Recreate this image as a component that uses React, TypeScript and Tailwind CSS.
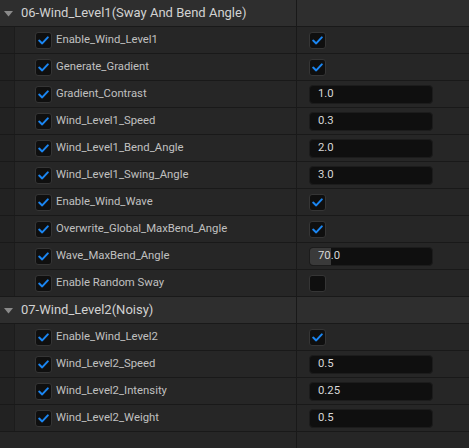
type Row = {
  label: string;
  kind: "check" | "input" | "slider" | "empty";
  value?: string;
};

const level1: Row[] = [
  { label: "Enable_Wind_Level1", kind: "check" },
  { label: "Generate_Gradient", kind: "check" },
  { label: "Gradient_Contrast", kind: "input", value: "1.0" },
  { label: "Wind_Level1_Speed", kind: "input", value: "0.3" },
  { label: "Wind_Level1_Bend_Angle", kind: "input", value: "2.0" },
  { label: "Wind_Level1_Swing_Angle", kind: "input", value: "3.0" },
  { label: "Enable_Wind_Wave", kind: "check" },
  { label: "Overwrite_Global_MaxBend_Angle", kind: "check" },
  { label: "Wave_MaxBend_Angle", kind: "slider", value: "70.0" },
  { label: "Enable Random Sway", kind: "empty" },
];

const level2: Row[] = [
  { label: "Enable_Wind_Level2", kind: "check" },
  { label: "Wind_Level2_Speed", kind: "input", value: "0.5" },
  { label: "Wind_Level2_Intensity", kind: "input", value: "0.25" },
  { label: "Wind_Level2_Weight", kind: "input", value: "0.5" },
];

const CheckBox = ({ checked }: { checked: boolean }) => (
  <div className="flex h-[17px] w-[17px] items-center justify-center rounded-[3px] border border-[#353535] bg-[#0f0f0f]">
    {checked && (
      <svg width="11" height="9" viewBox="0 0 11 9">
        <path
          d="M1.2 4.6 L4.2 7.4 L9.8 1.4"
          fill="none"
          stroke="#1b86f2"
          strokeWidth="2"
          strokeLinecap="round"
          strokeLinejoin="round"
        />
      </svg>
    )}
  </div>
);

const Header = ({ title }: { title: string }) => (
  <div className="flex h-[27px] border-b border-[#191919] bg-[#2e2e2e]">
    <div className="flex w-[297px] items-center border-r border-[#191919]">
      <svg width="9" height="6" viewBox="0 0 9 6" className="ml-[4px] mt-[1px]">
        <path d="M0 0 H9 L4.5 5.5 Z" fill="#8a8a8a" />
      </svg>
      <span className="ml-[8px] text-[13px] text-[#d2d2d2]">{title}</span>
    </div>
    <div className="flex-1" />
  </div>
);

const PropRow = ({ row }: { row: Row }) => (
  <div className="flex h-[27px] border-b border-[#191919] bg-[#262626]">
    <div className="flex w-[297px] border-r border-[#191919]">
      <div className="w-[15px] border-r border-[#1c1c1c] bg-[#222222]" />
      <div className="flex items-center pl-[20px]">
        <CheckBox checked />
        <span className="ml-[4px] text-[11.3px] text-[#c0c0c0]">{row.label}</span>
      </div>
    </div>
    <div className="flex flex-1 items-center pl-[12px]">
      {row.kind === "check" && <CheckBox checked />}
      {row.kind === "empty" && <CheckBox checked={false} />}
      {row.kind === "input" && (
        <div className="flex h-[19px] w-[124px] items-center rounded-[4px] border border-[#1c1c1c] bg-[#0f0f0f] pl-[8px] text-[11.3px] text-[#d8d8d8]">
          {row.value}
        </div>
      )}
      {row.kind === "slider" && (
        <div className="relative flex h-[19px] w-[124px] items-center rounded-[4px] border border-[#1c1c1c] bg-[#0f0f0f] text-[11.3px] text-[#d8d8d8]">
          <div className="absolute left-0 top-0 h-full w-[21px] rounded-l-[3px] bg-[#3a3a3a]" />
          <span className="relative pl-[8px]">{row.value}</span>
        </div>
      )}
    </div>
  </div>
);

const App = () => {
  return (
    <div
      className="h-[448px] w-[469px] overflow-hidden bg-[#262626]"
      style={{ fontFamily: "Roboto, 'Noto Sans', sans-serif" }}
    >
      <Header title="06-Wind_Level1(Sway And Bend Angle)" />
      {level1.map((row) => (
        <PropRow key={row.label} row={row} />
      ))}
      <Header title="07-Wind_Level2(Noisy)" />
      {level2.map((row) => (
        <PropRow key={row.label} row={row} />
      ))}
      <div className="flex h-[20px]">
        <div className="w-[297px] border-r border-[#191919]" />
      </div>
    </div>
  );
};

export default App;
